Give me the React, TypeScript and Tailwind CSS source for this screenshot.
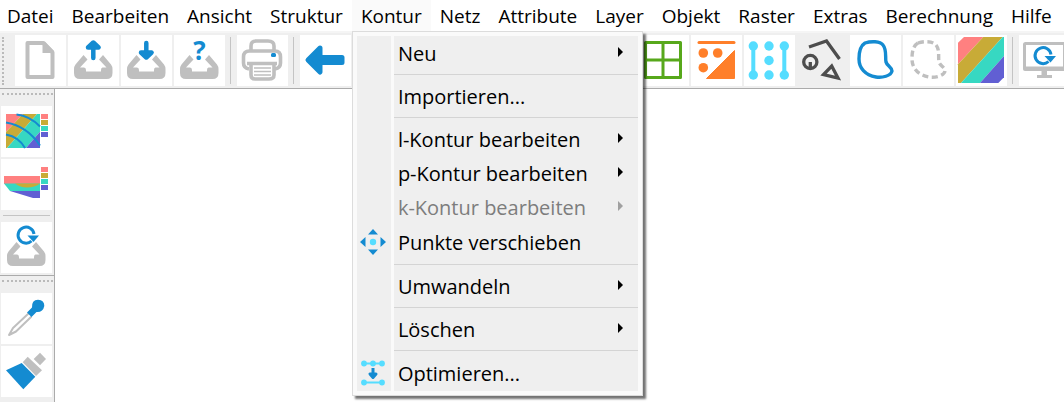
import type { ReactNode } from "react";

const menus = [
  "Datei",
  "Bearbeiten",
  "Ansicht",
  "Struktur",
  "Kontur",
  "Netz",
  "Attribute",
  "Layer",
  "Objekt",
  "Raster",
  "Extras",
  "Berechnung",
  "Hilfe",
];

function Icon({ children }: { children: ReactNode }) {
  return (
    <svg
      viewBox="0 0 51 51"
      className="h-[51px] w-[51px] overflow-visible"
      fill="none"
      aria-hidden="true"
    >
      {children}
    </svg>
  );
}

function ToolButton({
  label,
  active,
  children,
}: {
  label: string;
  active?: boolean;
  children?: ReactNode;
}) {
  return (
    <button
      type="button"
      aria-label={label}
      className={`h-[51px] w-[51px] shrink-0 ${active ? "bg-[#efefef]" : "bg-white"}`}
    >
      <Icon>{children}</Icon>
    </button>
  );
}

function ToolSeparator() {
  return (
    <div className="flex h-[51px] w-2 shrink-0 items-center pl-[3px]">
      <div className="h-[47px] w-px bg-[#c4c4c4]" />
    </div>
  );
}

const Tray = () => (
  <path
    d="M15.5 20L7.5 29.5Q6 31.5 6 34V38Q6 44 12 44H38.5Q44.5 44 44.5 38V34Q44.5 31.5 43 29.5L35 20L31 24.5L38.5 32.5H34.5Q33 32.5 33 35V36.5H18V35Q18 32.5 16 32.5H12L19.5 24.5Z"
    fill="#bfbfbf"
  />
);

const Reload = () => (
  <>
    <path d="M5.5 6A8 8 0 1 1 8 -1" stroke="#148bd1" strokeWidth="3" />
    <path d="M1.5 0.5H13L7.5 7Z" fill="#148bd1" />
  </>
);

const ArrowLeft = () => (
  <path
    d="M20 13L8 25L20 37V27.5H42V22.5H20Z"
    fill="#148bd1"
    stroke="#148bd1"
    strokeWidth="5"
    strokeLinejoin="round"
  />
);

const blob =
  "M15 8C21 6 30 6 33 10C37 15 35 22 36 27C37 31 42 32 42 36C41 41 32 43 26 42C15 40 9 33 9 24C9 17 10 11 15 8Z";

function Swatches() {
  return (
    <>
      <path d="M40 8h7v5h-7z" fill="#ff8080" />
      <path d="M40 14h7v5h-7z" fill="#c8ab37" />
      <path d="M40 20h7v5h-7z" fill="#37d8c2" />
      <path d="M40 26h7v5h-7z" fill="#615fd3" />
    </>
  );
}

function Toolbar() {
  return (
    <div
      role="toolbar"
      aria-label="Werkzeuge"
      className="flex items-center gap-[2px] overflow-hidden border-t-2 border-b border-t-[#f5f5f5] border-b-[#ababab] bg-[#efefef] pt-[2px] pb-[2px] pl-[2px]"
    >
      <div className="mr-[9px] h-12 w-0 shrink-0 border-l-2 border-dotted border-[#bababa]" />
      <ToolButton label="Neu">
        <path
          d="M12.5 8H28.5L37.5 17.5V42H12.5Z"
          stroke="#bfbfbf"
          strokeWidth="4"
          strokeLinejoin="round"
        />
        <path d="M27.5 7H30L39 16V18H27.5Z" fill="#bfbfbf" />
      </ToolButton>
      <ToolButton label="Öffnen">
        <Tray />
        <path
          d="M25.3 23V12M20 12.5L25.3 7.5L30.6 12.5Z"
          fill="#148bd1"
          stroke="#148bd1"
          strokeWidth="4.5"
          strokeLinecap="round"
          strokeLinejoin="round"
        />
      </ToolButton>
      <ToolButton label="Speichern">
        <Tray />
        <path
          d="M25.3 8V18M20 17.5L25.3 22.5L30.6 17.5Z"
          fill="#148bd1"
          stroke="#148bd1"
          strokeWidth="4.5"
          strokeLinecap="round"
          strokeLinejoin="round"
        />
      </ToolButton>
      <ToolButton label="Information">
        <Tray />
        <text
          x="25.5"
          y="25"
          textAnchor="middle"
          fill="#148bd1"
          className="font-['Open_Sans',sans-serif] text-[26px] font-bold"
        >
          ?
        </text>
      </ToolButton>
      <ToolSeparator />
      <ToolButton label="Drucken">
        <g stroke="#bfbfbf" strokeWidth="3.6" strokeLinejoin="round">
          <path d="M14 16V11Q14 6 19 6H31Q37 6 37 11V16" />
          <path d="M12 34Q6.5 33 6.5 28V22Q6.5 16 12.5 16H38Q43.5 16 43.5 22V28Q43.5 33 38 34" />
          <path d="M10 28.5H40M14 29V40Q14 44 18 44H32Q37 44 37 40V29" />
        </g>
        <path d="M17 33H34M17 36.5H34M17 40H34" stroke="#bfbfbf" strokeWidth="1.6" />
        <rect x="34" y="18" width="5" height="4" rx="1.5" fill="#148bd1" />
      </ToolButton>
      <ToolSeparator />
      <ToolButton label="Zurück">
        <ArrowLeft />
      </ToolButton>
      <ToolButton label="Vor">
        <g transform="rotate(180 25.5 25)">
          <ArrowLeft />
        </g>
      </ToolButton>
      <ToolButton label="Ansicht" />
      <ToolSeparator />
      <ToolButton label="Struktur" />
      <ToolButton label="Kontur" />
      <ToolSeparator />
      <ToolButton label="Netz" />
      <ToolButton label="Gitter">
        <path
          d="M7.5 7.5H42.5V42.5H7.5ZM25 7.5V42.5M7.5 25H42.5"
          stroke="#57a81b"
          strokeWidth="3"
          strokeLinejoin="round"
        />
      </ToolButton>
      <ToolButton label="Dreiecke">
        <path d="M8 7.5H43" stroke="#ff7f2a" strokeWidth="3" strokeLinecap="round" />
        <g fill="#ff7f2a">
          <circle cx="12.3" cy="18" r="4.8" />
          <circle cx="26.7" cy="18" r="4.8" />
          <circle cx="12.3" cy="32.7" r="4.8" />
          <path d="M43.5 15.5V43.5H15.5Z" stroke="#ff7f2a" strokeLinejoin="round" />
        </g>
      </ToolButton>
      <ToolButton label="Punkte">
        <path d="M9.3 11V40M40.3 11V40" stroke="#55ddff" strokeWidth="4" />
        <g fill="#55ddff">
          <circle cx="9.3" cy="11" r="4.7" />
          <circle cx="9.3" cy="40" r="4.7" />
          <circle cx="25" cy="11" r="4.7" />
          <circle cx="25" cy="25.5" r="4.7" />
          <circle cx="25" cy="40" r="4.7" />
          <circle cx="40.3" cy="11" r="4.7" />
          <circle cx="40.3" cy="40" r="4.7" />
        </g>
      </ToolButton>
      <ToolButton label="Elemente" active>
        <g stroke="#4d4d4d" strokeWidth="3.3">
          <path d="M12 12L29.5 6L42.5 24" />
          <circle cx="13.3" cy="27" r="6.6" />
          <path d="M13.3 27V33M34.7 31L41 43L26.5 39.5Z" />
        </g>
      </ToolButton>
      <ToolButton label="Umriss">
        <path d={blob} stroke="#148bd1" strokeWidth="3.4" />
      </ToolButton>
      <ToolButton label="Umriss gestrichelt">
        <path d={blob} stroke="#bfbfbf" strokeWidth="3.4" strokeDasharray="6 3.5" />
      </ToolButton>
      <ToolButton label="Farbflächen">
        <path d="M8 2H27.3L2 29.3V7.7Z" fill="#ff8080" />
        <path d="M27.3 2H46.7L5 48H2V29.3Z" fill="#c8ab37" />
        <path d="M46.7 2H48V21L24 48H5Z" fill="#37d8c2" />
        <path d="M48 21V42.3L42.3 48H24Z" fill="#615fd3" />
      </ToolButton>
      <ToolSeparator />
      <ToolButton label="Bildschirm aktualisieren">
        <rect x="5.5" y="8.5" width="40" height="25" rx="1" stroke="#bfbfbf" strokeWidth="3" />
        <path d="M4 31.5H47V34Q47 36 45 36H6Q4 36 4 34Z" fill="#bfbfbf" />
        <path d="M22.5 36H28V40H33V43H18V40H22.5Z" fill="#bfbfbf" />
        <g transform="translate(24 20.5)">
          <Reload />
        </g>
      </ToolButton>
    </div>
  );
}

function SideHandle() {
  return <div className="ml-px h-0 w-[51px] border-t-2 border-dotted border-[#bababa]" />;
}

function Sidebar() {
  return (
    <aside className="w-[55px] shrink-0 border-r border-[#ababab] bg-[#efefef]">
      <div className="flex flex-col gap-[2px] border-b border-[#ababab] pt-1 pb-[2px] pl-px">
        <SideHandle />
        <div className="h-[7px]" />
        <ToolButton label="Höhenplan">
          <path d="M5 8H22L5 26Z" fill="#ff8080" />
          <path d="M22 8H36L6 42H5V26Z" fill="#c8ab37" />
          <path d="M36 8H39V25.7L25 42H6Z" fill="#37d8c2" />
          <path d="M39 25.7V42H25Z" fill="#615fd3" />
          <path
            d="M15.5 8.5Q29 10 39 20.5M5 16.5Q26 20 39 39.5M5 28.5Q18 31 24 42"
            stroke="#148bd1"
            strokeWidth="2"
          />
          <Swatches />
        </ToolButton>
        <ToolButton label="Profil">
          <path d="M3 17H39V25H3Z" fill="#ff8080" />
          <path d="M3 24.5H39V32H9Z" fill="#37d8c2" />
          <path d="M14 24.5H39Q34 28.5 26 28.5Q19 28.5 14 24.5Z" fill="#c8ab37" />
          <path d="M9 32H39V39H32Z" fill="#615fd3" />
          <Swatches />
        </ToolButton>
        <div className="flex h-2 w-[51px] flex-col items-center pt-[3px]">
          <div className="h-px w-[47px] bg-[#c4c4c4]" />
        </div>
        <ToolButton label="Aktualisieren">
          <Tray />
          <g transform="translate(25 13)">
            <Reload />
          </g>
        </ToolButton>
      </div>
      <div className="flex flex-col gap-[2px] pt-1 pb-[2px] pl-px">
        <SideHandle />
        <div className="h-[7px]" />
        <ToolButton label="Pipette">
          <path
            d="M27.5 20.5L12 35L8 42L15 38.5L30.5 23.5"
            stroke="#bfbfbf"
            strokeWidth="2"
            strokeLinejoin="round"
          />
          <path
            d="M26 19.5L31 14.5Q30.5 7 37 6.7Q43.5 7 43.3 13Q42 19.5 35.5 19L30.5 24Z"
            fill="#148bd1"
          />
        </ToolButton>
        <ToolButton label="Pinsel">
          <path d="M5 24.3L20.7 17L34.3 30.7L22.3 43.3Z" fill="#148bd1" />
          <path d="M26.7 10.7L41 24.3L35 30L21.7 16.3Z" fill="#bfbfbf" />
          <path d="M39 6.7L45 13L39 19.3L32.7 13Z" fill="#bfbfbf" />
        </ToolButton>
      </div>
    </aside>
  );
}

function MoveIcon() {
  return (
    <svg viewBox="0 0 26 26" className="h-[26px] w-[26px]" aria-hidden="true">
      <path d="M13 0L18 5.5H8ZM13 26L18 20.5H8ZM0 13L5.5 8V18ZM26 13L20.5 8V18Z" fill="#148bd1" />
      <circle cx="13" cy="13" r="3.2" fill="#55ddff" />
    </svg>
  );
}

function OptimizeIcon() {
  return (
    <svg viewBox="0 0 26 26" className="h-[26px] w-[26px]" aria-hidden="true">
      <path d="M4 3.5H22M4 22.5H22" stroke="#55ddff" strokeWidth="1.8" />
      <g fill="#55ddff">
        <circle cx="4" cy="3.5" r="2.9" />
        <circle cx="13" cy="3.5" r="2.9" />
        <circle cx="22" cy="3.5" r="2.9" />
        <circle cx="4" cy="22.5" r="2.9" />
        <circle cx="22" cy="22.5" r="2.9" />
      </g>
      <path
        d="M13 8V14M10 14H16L13 17.5Z"
        fill="#148bd1"
        stroke="#148bd1"
        strokeWidth="3"
        strokeLinejoin="round"
      />
    </svg>
  );
}

function MenuItem({
  label,
  submenu,
  disabled,
  icon,
}: {
  label: string;
  submenu?: boolean;
  disabled?: boolean;
  icon?: ReactNode;
}) {
  return (
    <button
      type="button"
      role="menuitem"
      disabled={disabled}
      className={`flex w-full items-center text-left ${icon ? "h-9" : "h-[34px]"} ${
        disabled ? "text-[#7d7d7d]" : "text-black"
      }`}
    >
      <span className="flex w-[41px] shrink-0 items-center pl-[3px]">{icon}</span>
      <span className="flex-1 pt-[2px] whitespace-nowrap">{label}</span>
      {submenu && (
        <svg
          viewBox="0 0 5 10"
          className={`mr-[15px] mb-[2px] h-[10px] w-[5px] ${
            disabled ? "text-[#a0a0a0]" : "text-black"
          }`}
          fill="currentColor"
          aria-hidden="true"
        >
          <path d="M0 0L5 5L0 10Z" />
        </svg>
      )}
    </button>
  );
}

function MenuSeparator() {
  return (
    <div role="separator" className="py-1 pl-[37px]">
      <div className="h-px bg-[#d4d4d4]" />
    </div>
  );
}

function KonturMenu() {
  return (
    <div
      role="menu"
      aria-label="Kontur"
      className="absolute top-full left-0 z-10 w-[291px] border border-[#dcdcdc] bg-[#fafafa] p-1 text-xl leading-6 shadow-[3px_3px_2px_rgba(0,0,0,0.55)]"
    >
      <div className="bg-[linear-gradient(to_right,#efefef_34px,#fafafa_34px,#fafafa_37px,#efefef_37px)]">
        <MenuItem label="Neu" submenu />
        <MenuSeparator />
        <MenuItem label="Importieren..." />
        <MenuSeparator />
        <MenuItem label="l-Kontur bearbeiten" submenu />
        <MenuItem label="p-Kontur bearbeiten" submenu />
        <MenuItem label="k-Kontur bearbeiten" submenu disabled />
        <MenuItem label="Punkte verschieben" icon={<MoveIcon />} />
        <MenuSeparator />
        <MenuItem label="Umwandeln" submenu />
        <MenuSeparator />
        <MenuItem label="Löschen" submenu />
        <MenuSeparator />
        <MenuItem label="Optimieren..." icon={<OptimizeIcon />} />
      </div>
    </div>
  );
}

function App() {
  return (
    <div className="flex h-screen min-h-[402px] flex-col overflow-hidden bg-white font-['Open_Sans','Noto_Sans',sans-serif] text-[19px] leading-6 text-black">
      <nav className="-ml-[2px] flex h-[31px] shrink-0">
        {menus.map((name) => (
          <div key={name} className="relative shrink-0">
            <button
              type="button"
              className={`h-full px-[9px] ${name === "Kontur" ? "bg-[#fafafa]" : ""}`}
            >
              {name}
            </button>
            {name === "Kontur" && <KonturMenu />}
          </div>
        ))}
      </nav>
      <Toolbar />
      <div className="flex min-h-0 flex-1">
        <Sidebar />
        <main className="flex-1 bg-white" />
      </div>
    </div>
  );
}

export default App;
